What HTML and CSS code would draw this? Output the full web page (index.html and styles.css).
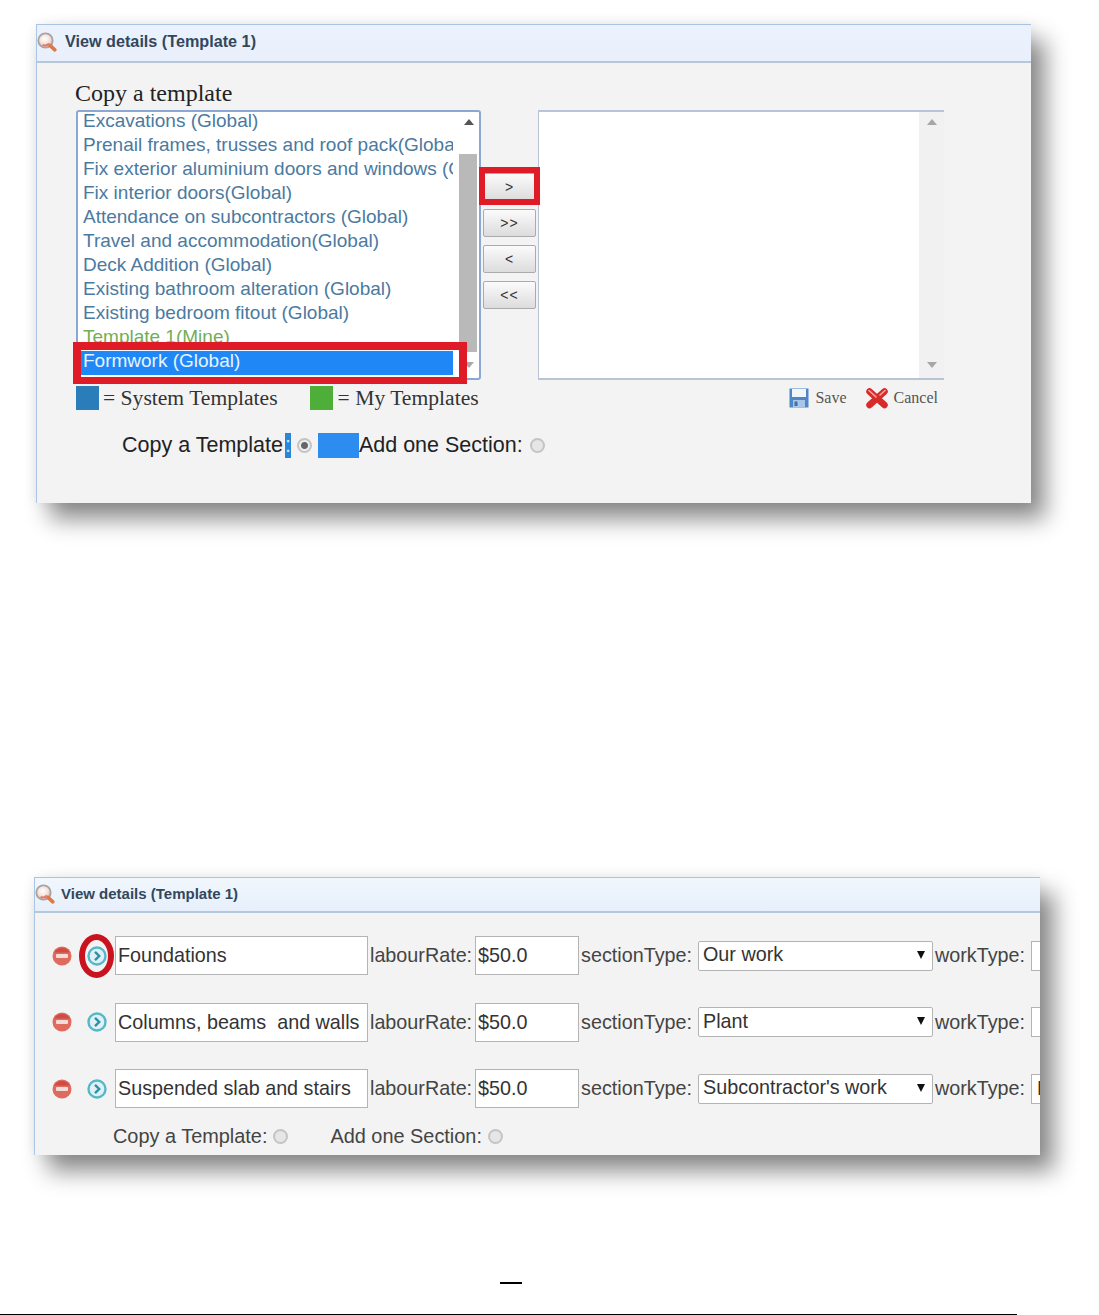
FILE: index.html
```html
<!DOCTYPE html>
<html lang="en">
<head>
  <meta charset="UTF-8" />
  <title>View details (Template 1)</title>
  <link rel="stylesheet" href="styles.css">
</head>
<body>

<svg class="sprites" width="0" height="0">
  <defs>
    <radialGradient id="lens" cx="45%" cy="40%" r="60%">
      <stop offset="0" stop-color="#fff"/>
      <stop offset="0.6" stop-color="#f5e0da"/>
      <stop offset="1" stop-color="#d2b8b2"/>
    </radialGradient>
    <symbol id="icon-view" viewBox="0 0 20 20">
      <circle cx="8.5" cy="8.5" r="7.2" fill="url(#lens)" stroke="#aaa3a3" stroke-width="1.8"/>
      <path d="M13 13.4l4.800 4.400" stroke="#e2773f" stroke-width="3.600" stroke-linecap="round"/>
      <path d="M5.500 13a5.500 5.500 0 0 0 6.500-1.500" fill="none" stroke="#e77b6b" stroke-width="2"/>
    </symbol>
    <symbol id="icon-minus" viewBox="0 0 20 20">
      <circle cx="10" cy="10" r="9.500" fill="#df6a5e"/>
      <path d="M2 6.500a9.500 9.500 0 0 1 16 0z" fill="#cf4b45"/>
      <rect x="4" y="8" width="12" height="4" rx="1" fill="#f2dcd8"/>
    </symbol>
    <symbol id="icon-expand" viewBox="0 0 20 20">
      <circle cx="10" cy="10" r="8.500" fill="#dff1f5" stroke="#55b8c8" stroke-width="2.400"/>
      <path d="M8 5.800l4.200 4.200-4.200 4.200" fill="none" stroke="#2f8fa8" stroke-width="2.400"/>
    </symbol>
  </defs>
</svg>

<!-- Copy a template -->
<section class="panel panel-copy">
  <header class="panel-head">
    <svg class="icon-view"><use href="#icon-view"/></svg>
    <span class="panel-title">View details (Template 1)</span>
  </header>
  <div class="copy-body">
    <h2 class="copy-title">Copy a template</h2>

    <div class="picker">
      <div class="listbox listbox-left">
        <ul class="list-items">
          <li class="item">Excavations (Global)</li>
          <li class="item">Prenail frames, trusses and roof pack(Global)</li>
          <li class="item">Fix exterior aluminium doors and windows (Global)</li>
          <li class="item">Fix interior doors(Global)</li>
          <li class="item">Attendance on subcontractors (Global)</li>
          <li class="item">Travel and accommodation(Global)</li>
          <li class="item">Deck Addition (Global)</li>
          <li class="item">Existing bathroom alteration (Global)</li>
          <li class="item">Existing bedroom fitout (Global)</li>
          <li class="item item-mine">Template 1(Mine)</li>
          <li class="item item-selected">Formwork (Global)</li>
        </ul>
        <div class="scrollbar">
          <span class="arrow-up"></span>
          <span class="thumb"></span>
          <span class="arrow-down"></span>
        </div>
      </div>

      <div class="move-buttons">
        <button class="move-btn" type="button">&gt;</button>
        <button class="move-btn" type="button">&gt;&gt;</button>
        <button class="move-btn" type="button">&lt;</button>
        <button class="move-btn" type="button">&lt;&lt;</button>
      </div>

      <div class="listbox listbox-right">
        <div class="list-empty"></div>
        <div class="scrollbar scrollbar-empty">
          <span class="arrow-up"></span>
          <span class="arrow-down"></span>
        </div>
      </div>

      <!-- red annotations -->
      <div class="mark mark-formwork"></div>
      <div class="mark mark-move"></div>
    </div>

    <div class="legend">
      <span class="swatch swatch-blue"></span>
      <span class="legend-text legend-system">= System Templates</span>
      <span class="swatch swatch-green"></span>
      <span class="legend-text legend-mine">= My Templates</span>
      <span class="action action-save">
        <svg class="icon-save" viewBox="0 0 20 20">
          <rect x="0.500" y="0.500" width="19" height="19" fill="#4f86c8"/>
          <rect x="3" y="1" width="14" height="8" fill="#f2f6fb"/>
          <rect x="4" y="12" width="12" height="7.500" fill="#a9c6e8"/>
          <rect x="5.500" y="13.500" width="3" height="4.500" fill="#3f6fa8"/>
        </svg>
        Save
      </span>
      <span class="action action-cancel">
        <svg class="icon-cancel" viewBox="0 0 24 22">
          <path d="M4.500 4.500l15 13.500M19.500 4.500l-15 13.500" fill="none" stroke="#d92a2a" stroke-width="6.500" stroke-linecap="round"/>
          <path d="M4 3.500l7 6.500M20 3.500l-5 4.500" fill="none" stroke="#f3a9a4" stroke-width="1.600" stroke-linecap="round"/>
        </svg>
        Cancel
      </span>
    </div>

    <div class="mode-row">
      <label class="mode-label">Copy a Template<span class="sel-colon">:</span></label>
      <input class="radio radio-on" type="radio" name="mode1" checked>
      <span class="sel-block"></span>
      <label class="mode-label">Add one Section:</label>
      <input class="radio radio-last" type="radio" name="mode1">
    </div>
  </div>
</section>

<!-- Add one section -->
<section class="panel panel-sections">
  <header class="panel-head">
    <svg class="icon-view"><use href="#icon-view"/></svg>
    <span class="panel-title">View details (Template 1)</span>
  </header>
  <div class="sections-body">

    <div class="section-row">
      <svg class="icon-minus"><use href="#icon-minus"/></svg>
      <span class="expand-wrap">
        <svg class="icon-expand"><use href="#icon-expand"/></svg>
        <span class="mark-ring"></span>
      </span>
      <input class="field field-name" value="Foundations">
      <span class="field-label label-rate">labourRate:</span>
      <input class="field field-rate" value="$50.0">
      <span class="field-label label-section">sectionType:</span>
      <span class="select-wrap"><select class="field-select"><option>Our work</option></select></span>
      <span class="field-label label-work">workType:</span>
      <input class="field field-work" value="">
    </div>

    <div class="section-row">
      <svg class="icon-minus"><use href="#icon-minus"/></svg>
      <span class="expand-wrap"><svg class="icon-expand"><use href="#icon-expand"/></svg></span>
      <input class="field field-name" value="Columns, beams  and walls">
      <span class="field-label label-rate">labourRate:</span>
      <input class="field field-rate" value="$50.0">
      <span class="field-label label-section">sectionType:</span>
      <span class="select-wrap"><select class="field-select"><option>Plant</option></select></span>
      <span class="field-label label-work">workType:</span>
      <input class="field field-work" value="">
    </div>

    <div class="section-row">
      <svg class="icon-minus"><use href="#icon-minus"/></svg>
      <span class="expand-wrap"><svg class="icon-expand"><use href="#icon-expand"/></svg></span>
      <input class="field field-name" value="Suspended slab and stairs">
      <span class="field-label label-rate">labourRate:</span>
      <input class="field field-rate" value="$50.0">
      <span class="field-label label-section">sectionType:</span>
      <span class="select-wrap"><select class="field-select"><option>Subcontractor's work</option></select></span>
      <span class="field-label label-work">workType:</span>
      <input class="field field-work" value="Both">
    </div>

    <div class="footer-row">
      <label class="footer-label">Copy a Template:</label>
      <input class="radio radio-copy" type="radio" name="mode2">
      <label class="footer-label footer-label-add">Add one Section:</label>
      <input class="radio radio-add" type="radio" name="mode2">
    </div>
  </div>
</section>

<div class="page-dash"></div>
<div class="page-rule"></div>

</body>
</html>
```

FILE: styles.css
```css
html, body {
  margin: 0;
  padding: 0;
  background: #fff;
  height: 1315px;
  overflow: hidden;
}
body {
  font-family: "Liberation Sans", Arial, sans-serif;
}
.sprites {
  position: absolute;
}

/* panels */
.panel {
  box-sizing: border-box;
  background: #f3f3f3;
  border-left: 1px solid #a9c6e6;
  border-top: 1px solid #a9c3e0;
  overflow: hidden;
  box-shadow: 14px 16px 22px rgba(0,0,0,0.46), 0 0 12px rgba(0,0,0,0.07);
}
.panel-copy {
  margin: 24px 0 0 36px;
  width: 995px;
  height: 479px;
}
.panel-sections {
  margin: 374px 0 0 34px;
  width: 1006px;
  height: 278px;
}
.panel-head {
  display: flex;
  align-items: center;
  box-sizing: border-box;
  height: 38px;
  padding: 0 0 3px 1px;
  background: linear-gradient(#eaf2fe, #e9f0fb);
  border-bottom: 2px solid #b7c7da;
  margin-left: -1px;
}
.panel-sections .panel-head {
  height: 35px;
  padding-bottom: 2px;
  background: linear-gradient(#f1f7fd, #e6effb);
}
.panel-title {
  font-size: 16.2px;
  font-weight: bold;
  color: #33475c;
  margin-left: 8px;
}
.panel-sections .panel-title {
  font-size: 15px;
  margin-left: 6px;
}
.icon-view {
  width: 20px;
  height: 20px;
  flex: none;
}

/* copy a template */
.copy-body {
  padding: 16px 0 0 39px;
}
.copy-title {
  margin: 0 0 3px -1px;
  font-family: "Liberation Serif", "Times New Roman", serif;
  font-size: 24px;
  font-weight: normal;
  line-height: 28px;
  color: #222;
}
.picker {
  position: relative;
  display: flex;
  width: 868px;
  height: 270px;
}
.listbox {
  box-sizing: border-box;
  display: flex;
  height: 270px;
  background: #fff;
}
.listbox-left {
  width: 405px;
  border: 2px solid #8ba7d4;
  border-radius: 3px;
}
.listbox-right {
  width: 406px;
  margin-left: 2px;
  border-top: 2px solid #b9c5d6;
  border-bottom: 2px solid #b9c5d6;
  border-left: 1px solid #b9c5d6;
}
.list-items {
  flex: 1;
  min-width: 0;
  margin: -1px 6px 0 0;
  padding: 0;
  list-style: none;
  overflow: hidden;
}
.item {
  height: 24px;
  line-height: 20px;
  padding-left: 5px;
  font-size: 19px;
  color: #4b7a9f;
  white-space: nowrap;
  overflow: hidden;
}
.item-mine {
  color: #74ad55;
}
.item-selected {
  background: #1f88f6;
  color: #e8f3ff;
}
.list-empty {
  flex: 1;
}

.scrollbar {
  position: relative;
  flex: none;
  width: 20px;
  display: flex;
  flex-direction: column;
  align-items: center;
}
.scrollbar .thumb {
  width: 18px;
  height: 198px;
  margin: 42px 2px 0 0;
  background: #b9b9b9;
}
.arrow-up, .arrow-down {
  position: absolute;
  width: 0;
  height: 0;
  border-left: 5px solid transparent;
  border-right: 5px solid transparent;
}
.arrow-up {
  top: 7px;
  border-bottom: 6px solid #555;
}
.arrow-down {
  bottom: 10px;
  border-top: 6px solid #aaa;
}
.scrollbar-empty {
  width: 25px;
  background: #f1f1f1;
}
.scrollbar-empty .arrow-up {
  border-bottom-color: #a6a6a6;
}
.scrollbar-empty .arrow-down {
  border-top-color: #a6a6a6;
}

.move-buttons {
  display: flex;
  flex-direction: column;
  gap: 8px;
  width: 53px;
  margin-left: 2px;
  padding-top: 63px;
}
.move-btn {
  box-sizing: border-box;
  width: 53px;
  height: 28px;
  padding: 0;
  background: linear-gradient(#fbfbfb, #dcdcdc);
  border: 1px solid #ababab;
  border-radius: 2px;
  color: #333;
  font-family: "Liberation Sans", Arial, sans-serif;
  font-size: 14px;
  letter-spacing: 1px;
}

/* red annotation boxes */
.mark {
  position: absolute;
  box-sizing: border-box;
  border-style: solid;
  border-color: #e01b28;
}
.mark-formwork {
  left: -3px;
  top: 232px;
  width: 394px;
  height: 42px;
  border-width: 8px 8px 7px 8px;
}
.mark-move {
  left: 403px;
  top: 57px;
  width: 61px;
  height: 38px;
  border-width: 6px;
}

/* legend */
.legend {
  display: flex;
  align-items: center;
  width: 868px;
  height: 24px;
  margin-top: 6px;
  font-family: "Liberation Serif", "Times New Roman", serif;
  font-size: 21.6px;
  color: #333;
}
.swatch {
  flex: none;
  width: 23px;
  height: 24px;
}
.swatch-blue {
  background: #2a7db8;
}
.swatch-green {
  background: #4fae3a;
}
.legend-system {
  margin: 0 32px 0 4px;
}
.legend-mine {
  margin-left: 5px;
}
.action {
  display: flex;
  align-items: center;
  gap: 6px;
  font-size: 16px;
  color: #555;
}
.action-save {
  margin-left: auto;
}
.action-cancel {
  margin: 0 6px 0 18px;
}
.icon-save {
  width: 20px;
  height: 20px;
}
.icon-cancel {
  width: 24px;
  height: 22px;
  margin-right: -1px;
}

/* radio rows */
.mode-row {
  display: flex;
  align-items: center;
  height: 25px;
  margin-top: 23px;
  padding-left: 46px;
  font-size: 21.5px;
  color: #222;
}
.sel-colon {
  background: #2a86d8;
  color: #cfe6fb;
  display: inline-block;
  line-height: 25px;
  margin-left: 2px;
}
.sel-block {
  width: 41px;
  height: 25px;
  margin-left: 6px;
  background: #2d8cf0;
}
.radio {
  appearance: none;
  box-sizing: border-box;
  flex: none;
  width: 15px;
  height: 15px;
  margin: 0;
  border-radius: 50%;
  border: 2px solid #c4c4c4;
  background: #e6e6e6;
}
.radio-on {
  margin-left: 6px;
  background: radial-gradient(circle, #666 0 3px, #eee 4px);
}
.radio-last {
  margin-left: 7px;
}

/* sections */
.sections-body {
  padding: 23px 0 0 17px;
}
.section-row {
  display: flex;
  align-items: center;
  height: 39px;
  margin-bottom: 27.5px;
  white-space: nowrap;
}
.icon-minus {
  flex: none;
  width: 20px;
  height: 20px;
}
.expand-wrap {
  position: relative;
  flex: none;
  width: 20px;
  height: 20px;
  margin: 0 8px 0 15px;
}
.icon-expand {
  display: block;
  width: 20px;
  height: 20px;
}
.mark-ring {
  position: absolute;
  left: -8px;
  top: -12px;
  box-sizing: border-box;
  width: 35px;
  height: 44px;
  border: 6px solid #c8141f;
  border-radius: 50%;
}
.field {
  flex: none;
  box-sizing: border-box;
  height: 39px;
  padding: 0 2px;
  background: #fff;
  border: 1px solid #b4b4b4;
  border-radius: 0;
  font-family: "Liberation Sans", Arial, sans-serif;
  font-size: 19.75px;
  color: #333;
}
.field-name {
  width: 253px;
}
.field-rate {
  width: 104px;
}
.field-work {
  width: 40px;
  height: 30px;
  padding-left: 5px;
}
.field-label {
  flex: none;
  font-size: 19.75px;
  color: #444;
}
.label-rate {
  margin: 0 3px 0 2px;
}
.label-section {
  margin: 0 6px 0 2px;
}
.label-work {
  margin: 0 6px 0 2px;
}
.select-wrap {
  position: relative;
  flex: none;
  width: 235px;
  height: 30px;
}
.select-wrap::after {
  content: "";
  position: absolute;
  right: 8px;
  top: 10px;
  border-left: 4px solid transparent;
  border-right: 4px solid transparent;
  border-top: 8px solid #111;
}
.field-select {
  appearance: none;
  box-sizing: border-box;
  width: 100%;
  height: 30px;
  padding: 0 4px 3px;
  background: #fff;
  border: 1px solid #b4b4b4;
  border-radius: 2px;
  font-family: "Liberation Sans", Arial, sans-serif;
  font-size: 19.75px;
  color: #333;
}
.footer-row {
  display: flex;
  align-items: center;
  margin-top: -11px;
  padding-left: 61px;
  height: 24px;
  font-size: 19.9px;
  color: #444;
}
.radio-copy {
  margin-left: 6px;
}
.footer-label-add {
  margin-left: 42px;
}
.radio-add {
  margin-left: 6px;
}

/* page foot */
.page-dash {
  width: 22px;
  height: 2px;
  margin: 127px 0 0 500px;
  background: #000;
}
.page-rule {
  width: 1017px;
  height: 1px;
  margin-top: 30px;
  background: #000;
}
```
